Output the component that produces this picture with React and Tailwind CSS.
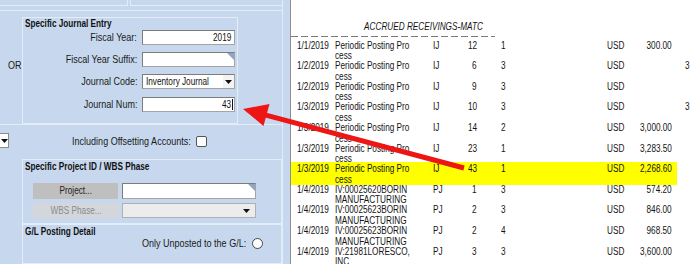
import React from 'react';

const rows = [
  { d: '1/1/2019', a: 'Periodic Posting Pro', b: 'cess', t: 'IJ', n: '12', c: '1', amt: '300.00', x: '' },
  { d: '1/2/2019', a: 'Periodic Posting Pro', b: 'cess', t: 'IJ', n: '6', c: '3', amt: '', x: '3' },
  { d: '1/2/2019', a: 'Periodic Posting Pro', b: 'cess', t: 'IJ', n: '9', c: '3', amt: '', x: '' },
  { d: '1/3/2019', a: 'Periodic Posting Pro', b: 'cess', t: 'IJ', n: '10', c: '3', amt: '', x: '3' },
  { d: '1/3/2019', a: 'Periodic Posting Pro', b: 'cess', t: 'IJ', n: '14', c: '2', amt: '3,000.00', x: '' },
  { d: '1/3/2019', a: 'Periodic Posting Pro', b: 'cess', t: 'IJ', n: '23', c: '1', amt: '3,283.50', x: '' },
  { d: '1/3/2019', a: 'Periodic Posting Pro', b: 'cess', t: 'IJ', n: '43', c: '1', amt: '2,268.60', x: '', hl: true },
  { d: '1/4/2019', a: 'IV:00025620BORIN', b: 'MANUFACTURING', t: 'PJ', n: '1', c: '3', amt: '574.20', x: '' },
  { d: '1/4/2019', a: 'IV:00025623BORIN', b: 'MANUFACTURING', t: 'PJ', n: '2', c: '3', amt: '846.00', x: '' },
  { d: '1/4/2019', a: 'IV:00025623BORIN', b: 'MANUFACTURING', t: 'PJ', n: '2', c: '4', amt: '968.50', x: '' },
  { d: '1/4/2019', a: 'IV:21981LORESCO,', b: 'INC', t: 'PJ', n: '3', c: '3', amt: '3,600.00', x: '' },
];

// the screen font is a narrow one, squeeze Arial-width text to match
const T = ({ children, o = 'origin-left' }) => (
  <span className={`inline-block whitespace-nowrap scale-x-[0.82] ${o}`}>{children}</span>
);

const Arrow = () => (
  <svg width="7" height="4" viewBox="0 0 7 4">
    <polygon points="0,0 7,0 3.5,4" fill="#111" />
  </svg>
);

const Corner = () => (
  <svg className="absolute right-0 top-0" width="7" height="7" viewBox="0 0 7 7">
    <polygon points="0,0 7,0 7,7" fill="#8ea6c6" />
  </svg>
);

const Input = ({ children, corner, className = '' }) => (
  <div
    className={`relative w-[93px] h-[15px] bg-white border border-[#a4a4a4] border-t-[#7c7c7c] border-l-[#7c7c7c] text-[10px] leading-[13px] text-[#111] ${className}`}
  >
    {children}
    {corner && <Corner />}
  </div>
);

const FieldRow = ({ label, children, className = '' }) => (
  <div className={`flex items-center ${className}`}>
    <div className="w-[114px] text-right text-[11px] leading-[13px] text-[#1a1a1a]">
      <T o="origin-right">{label}</T>
    </div>
    <div className="ml-[5px]">{children}</div>
  </div>
);

export default function App() {
  return (
    <div className="relative flex w-[690px] h-[264px] overflow-hidden bg-white font-['Liberation_Sans',Arial,sans-serif]">
      {/* Left criteria panel */}
      <div className="w-[291px] shrink-0 h-full bg-[#c7d8ee] border-r border-[#8e8e8e] flex flex-col">
        {/* cut-off boxes at top */}
        <div className="h-[12px] w-[283px] border-r border-[#e3ecf7] flex">
          <div className="w-[128px] h-[6px] border-b border-r border-[#e3ecf7]" />
          <div className="ml-[2px] flex-1 h-[6px] border-b border-l border-[#e3ecf7]" />
        </div>

        {/* Specific Journal Entry */}
        <div className="h-[119px] w-[283px] border-t border-r border-[#e3ecf7] flex items-start">
          <div className="w-[22px] pl-[8px] pt-[48px] text-[11px] leading-[13px] text-[#1a1a1a]">
            <T>OR</T>
          </div>
          <div className="mt-[6px] w-[216px] h-[107px] border border-[#e3ecf7]">
            <div className="pl-[2px] text-[10px] leading-[12px] font-bold text-[#111]">
              <T>Specific Journal Entry</T>
            </div>
            <div className="flex flex-col gap-[7px]">
              <FieldRow label="Fiscal Year:">
                <Input className="text-right pr-[3px]">
                  <T o="origin-right">2019</T>
                </Input>
              </FieldRow>
              <FieldRow label="Fiscal Year Suffix:">
                <Input corner />
              </FieldRow>
              <FieldRow label="Journal Code:">
                <Input className="flex">
                  <div className="flex-1 pl-[3px]">
                    <T>Inventory Journal</T>
                  </div>
                  <div className="w-[11px] h-full bg-[#f3f3f3] flex items-center justify-center">
                    <Arrow />
                  </div>
                </Input>
              </FieldRow>
              <FieldRow label="Journal Num:" className="mt-[1px]">
                <Input className="flex justify-end pr-[1px]">
                  <T o="origin-right">43</T>
                  <span className="w-[1px] h-[11px] mt-[1px] ml-[1px] bg-[#111]" />
                </Input>
              </FieldRow>
            </div>
          </div>
        </div>

        {/* Including Offsetting Accounts */}
        <div className="h-[41px] w-[283px] border-t border-r border-[#e3ecf7] flex items-start">
          <div className="mt-[8px] w-[9px] h-[15px] bg-white border border-l-0 border-[#8b8b8b] flex items-center justify-center">
            <Arrow />
          </div>
          <div className="mt-[10px] w-[182px] text-right text-[11px] leading-[13px] text-[#1a1a1a]">
            <T o="origin-right">Including Offsetting Accounts:</T>
          </div>
          <div className="mt-[11px] ml-[5px] w-[11px] h-[11px] bg-white border border-[#555] rounded-[2px]" />
        </div>

        {/* Specific Project ID / WBS Phase */}
        <div className="w-[283px] border-r border-[#e3ecf7] pl-[22px] flex flex-col">
          <div className="w-[260px] h-[65px] border border-[#e3ecf7]">
            <div className="pl-[2px] pt-[1px] text-[10px] leading-[12px] font-bold text-[#111]">
              <T>Specific Project ID / WBS Phase</T>
            </div>
            <div className="mt-[10px] flex items-center pl-[10px]">
              <div className="w-[85px] h-[16px] bg-[#bfbfbf] text-center text-[10px] leading-[16px] text-[#222]">
                <T o="origin-center">Project...</T>
              </div>
              <div className="relative ml-[4px] w-[134px] h-[16px] bg-white border border-[#a4a4a4] border-t-[#7c7c7c] border-l-[#7c7c7c]">
                <Corner />
              </div>
            </div>
            <div className="mt-[4px] flex items-center pl-[10px]">
              <div className="w-[86px] h-[15px] bg-[#d3d7dc] text-center text-[10px] leading-[15px] text-[#8a8a8a]">
                <T o="origin-center">WBS Phase...</T>
              </div>
              <div className="ml-[3px] w-[134px] h-[15px] bg-[#ececec] border border-[#b0b0b0] flex items-center justify-end pr-[5px]">
                <Arrow />
              </div>
            </div>
          </div>

          {/* G/L Posting Detail */}
          <div className="w-[260px] h-[40px] border border-[#e3ecf7]">
            <div className="pl-[2px] pt-[1px] text-[10px] leading-[12px] font-bold text-[#111]">
              <T>G/L Posting Detail</T>
            </div>
            <div className="flex items-center justify-end pr-[18px]">
              <span className="text-[11px] leading-[11px] text-[#1a1a1a]">
                <T o="origin-right">Only Unposted to the G/L:</T>
              </span>
              <span className="ml-[6px] w-[11px] h-[11px] rounded-full bg-white border border-[#444]" />
            </div>
          </div>
        </div>
      </div>

      {/* Report preview */}
      <div className="flex-1 h-full bg-white text-[#141414]">
        <div className="w-[204px] h-[36px] pt-[21px] pr-[12px] text-right text-[10px] leading-[12px] italic">
          <T o="origin-right">ACCRUED RECEIVINGS-MATC</T>
        </div>
        <div className="w-[204px] h-[1px] bg-[repeating-linear-gradient(90deg,#7a7a7a_0_7px,transparent_7px_10px)]" />
        <div className="pt-[3.7px]">
          {rows.map((r, i) => (
            <div key={i} className="relative flex h-[20.6px] text-[10px] leading-[10.5px]">
              {r.hl && <div className="absolute left-0 -top-[2.3px] h-[23px] w-[386px] bg-[#ffff00]" />}
              <div className="relative w-[44px] pl-[6px]"><T>{r.d}</T></div>
              <div className="relative w-[98px]">
                <div><T>{r.a}</T></div>
                <div><T>{r.b}</T></div>
              </div>
              <div className="relative w-[17px]"><T>{r.t}</T></div>
              <div className="relative w-[27px] text-right"><T o="origin-right">{r.n}</T></div>
              <div className="relative w-[130px] pl-[24px]"><T>{r.c}</T></div>
              <div className="relative w-[25px]"><T>USD</T></div>
              <div className="relative w-[40px] text-right"><T o="origin-right">{r.amt}</T></div>
              <div className="relative pl-[13px]"><T>{r.x}</T></div>
            </div>
          ))}
        </div>
      </div>

      {/* annotation arrow */}
      <svg className="absolute left-0 top-0 pointer-events-none" width="690" height="264" viewBox="0 0 690 264">
        <line x1="464" y1="168" x2="264" y2="114.6" stroke="#ee1515" strokeWidth="5" />
        <polygon points="243,109 269.5,104 263.5,126" fill="#ee1515" />
      </svg>
    </div>
  );
}
